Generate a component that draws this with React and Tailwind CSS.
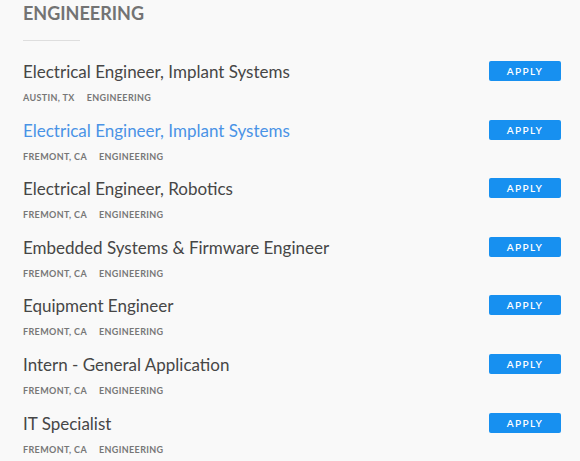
import React from 'react';

const jobs = [
  { title: 'Electrical Engineer, Implant Systems', location: 'Austin, TX' },
  { title: 'Electrical Engineer, Implant Systems', location: 'Fremont, CA', active: true },
  { title: 'Electrical Engineer, Robotics', location: 'Fremont, CA' },
  { title: 'Embedded Systems & Firmware Engineer', location: 'Fremont, CA' },
  { title: 'Equipment Engineer', location: 'Fremont, CA' },
  { title: 'Intern - General Application', location: 'Fremont, CA' },
  { title: 'IT Specialist', location: 'Fremont, CA' },
];

const JobRow = ({ job }) => (
  <div className="flex items-start justify-between pb-[13.6px]">
    <div className="flex flex-col">
      <a
        href="#"
        className={`text-[17px] leading-[24px] ${job.active ? 'text-[#4a93e6]' : 'text-[#464646]'}`}
      >
        {job.title}
      </a>
      <div className="mt-[7px] flex gap-[12px] text-[9px] leading-[14px] font-bold uppercase tracking-[0.04em] text-[#777777]">
        <span>{job.location}</span>
        <span>Engineering</span>
      </div>
    </div>
    <button className="mt-[1px] w-[72px] h-[20px] rounded-[2px] bg-[#1790f0] text-white text-[10px] font-semibold tracking-[0.14em] leading-none">
      APPLY
    </button>
  </div>
);

export default function App() {
  return (
    <div
      className="min-h-[461px] w-[580px] bg-[#f9f9f9] pl-[23px] pr-[19px] overflow-hidden"
      style={{ fontFamily: 'Lato, "Open Sans", sans-serif' }}
    >
      <h2 className="pt-[1px] text-[18px] leading-[24px] font-bold text-[#737373]">
        ENGINEERING
      </h2>
      <div className="mt-[15px] h-px w-[57px] bg-[#dedede]" />
      <div className="mt-[19px] flex flex-col">
        {jobs.map((job, i) => (
          <JobRow key={i} job={job} />
        ))}
      </div>
    </div>
  );
}
